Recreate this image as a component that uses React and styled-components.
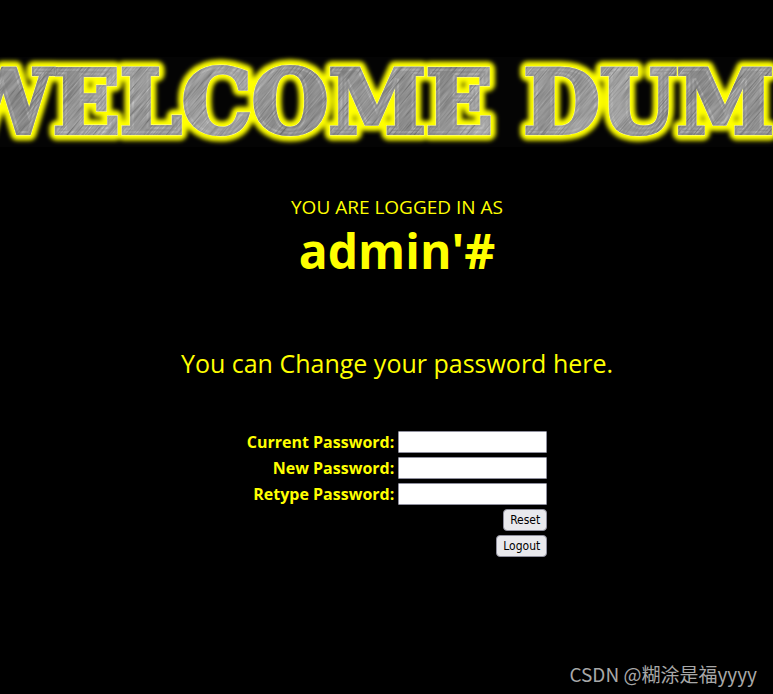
import React from "react";
import styled, { createGlobalStyle } from "styled-components";

const GlobalStyle = createGlobalStyle`
  *, *::before, *::after { box-sizing: border-box; }
  body {
    margin: 0;
    background: #000;
    color: #ff0;
    font-family: "Open Sans", "Noto Sans", sans-serif;
  }
`;

const Page = styled.div`
  display: flex;
  flex-direction: column;
  min-height: 100vh;
  padding-top: 57px;
  overflow: hidden;
`;

const Banner = styled.h1`
  margin: 0;
  height: 90px;
  background: #040404;
`;

const BannerArt = styled.svg`
  display: block;
  width: 100%;
  height: 90px;
  font-family: "DejaVu Serif", serif;
  font-size: 88px;
  font-weight: 700;
  overflow: visible;
`;

const Main = styled.main`
  display: flex;
  flex-direction: column;
  align-items: center;
  padding: 46px 0 0 21px;
`;

const Status = styled.p`
  margin: 0;
  font-size: 19px;
  line-height: 28px;
  text-align: center;
`;

const UserName = styled.strong`
  display: block;
  font-size: 48px;
  line-height: 60px;
`;

const Prompt = styled.h2`
  margin: 64px 0 0;
  font-size: 25px;
  font-weight: 400;
  line-height: 36px;
`;

const PasswordForm = styled.form`
  display: grid;
  grid-template-columns: auto 149px;
  gap: 4px;
  align-items: center;
  margin-top: 50px;
`;

const FieldLabel = styled.label`
  font-size: 16px;
  font-weight: 700;
  line-height: 22px;
  text-align: right;
`;

const FieldInput = styled.input`
  width: 100%;
  height: 22px;
  padding: 1px 4px;
  border: 1px solid #8f8f9d;
  border-radius: 1px;
  background: #fff;
`;

const FormButton = styled.button`
  grid-column: 2;
  justify-self: end;
  height: 22px;
  padding: 0 6px;
  border: 1px solid #8f8f9d;
  border-radius: 4px;
  background: #e9e9ed;
  color: #000;
  font-family: "DejaVu Sans Condensed", "Noto Sans", sans-serif;
  font-size: 12px;
  line-height: 20px;
`;

const Watermark = styled.footer`
  margin-top: auto;
  padding: 0 16px 6px 0;
  color: #a8a8a8;
  font-family: "Noto Sans CJK SC", sans-serif;
  font-size: 19px;
  line-height: 28px;
  text-align: right;
`;

const fields = [
  { id: "current_password", label: "Current Password:" },
  { id: "password", label: "New Password:" },
  { id: "re_password", label: "Retype Password:" },
];

const BANNER_TEXT = "WELCOME DUM";

function WelcomeBanner() {
  const place = { x: 774, y: 76, textAnchor: "end" };
  return (
    <Banner>
      <BannerArt viewBox="0 0 773 90" role="img" aria-label={BANNER_TEXT}>
        <defs>
          <linearGradient id="steel" gradientUnits="userSpaceOnUse" x1="0" y1="0" x2="150" y2="80" spreadMethod="reflect">
            <stop offset="0" stopColor="#7c7c7c" />
            <stop offset="0.35" stopColor="#686868" />
            <stop offset="0.7" stopColor="#989898" />
            <stop offset="1" stopColor="#787878" />
          </linearGradient>
          <filter id="grain" x="0" y="0" width="100%" height="100%">
            <feTurbulence type="fractalNoise" baseFrequency="0.03 0.7" numOctaves="3" seed="4" />
            <feColorMatrix values="0.9 0 0 0 -0.02  0.9 0 0 0 -0.02  0.9 0 0 0 -0.02  0 0 0 0 0.45" />
          </filter>
          <pattern id="brushed" patternUnits="userSpaceOnUse" width="1200" height="1200" x="-200" y="-200" patternTransform="rotate(-50)">
            <rect x="0" y="0" width="1200" height="1200" filter="url(#grain)" />
          </pattern>
          <filter id="glow" x="-5%" y="-30%" width="110%" height="160%">
            <feGaussianBlur stdDeviation="2" />
          </filter>
        </defs>
        <g aria-hidden="true">
          <text {...place} fill="#ff0" stroke="#ff0" strokeWidth="15" strokeLinejoin="round" filter="url(#glow)">{BANNER_TEXT}</text>
          <text {...place} fill="#ffffa0" stroke="#ffffa0" strokeWidth="5">{BANNER_TEXT}</text>
          <text {...place} fill="url(#steel)" stroke="url(#steel)" strokeWidth="4">{BANNER_TEXT}</text>
          <text {...place} fill="url(#brushed)" stroke="url(#brushed)" strokeWidth="4">{BANNER_TEXT}</text>
        </g>
      </BannerArt>
    </Banner>
  );
}

export default function App() {
  return (
    <>
      <GlobalStyle />
      <Page>
        <WelcomeBanner />
        <Main>
          <Status>
            YOU ARE LOGGED IN AS
            <UserName>admin'#</UserName>
          </Status>
          <Prompt>You can Change your password here.</Prompt>
          <PasswordForm onSubmit={(event) => event.preventDefault()}>
            {fields.map(({ id, label }) => (
              <React.Fragment key={id}>
                <FieldLabel htmlFor={id}>{label}</FieldLabel>
                <FieldInput id={id} name={id} type="password" />
              </React.Fragment>
            ))}
            <FormButton type="submit">Reset</FormButton>
            <FormButton type="button">Logout</FormButton>
          </PasswordForm>
        </Main>
        <Watermark>CSDN @糊涂是福yyyy</Watermark>
      </Page>
    </>
  );
}
